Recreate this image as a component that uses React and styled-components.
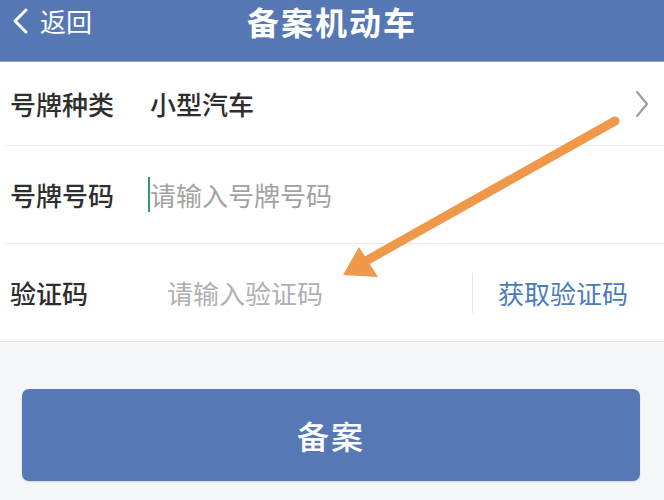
import React from "react";
import styled, { createGlobalStyle } from "styled-components";

const GlobalStyle = createGlobalStyle`
  html, body {
    margin: 0;
    padding: 0;
    background: #f4f6f8;
    font-family: "Noto Sans CJK SC", "Noto Sans", sans-serif;
  }
`;

const Page = styled.div`
  position: relative;
  width: 664px;
  height: 500px;
  overflow: hidden;
  background: #f4f6f8;
`;

const Header = styled.div`
  height: 61px;
  background: #5577b4;
  display: flex;
  align-items: flex-start;
  justify-content: center;
  position: relative;
  color: #fff;
  border-bottom: 1px solid #8aa3cf;
`;

const BackButton = styled.div`
  position: absolute;
  left: 10px;
  top: 3px;
  display: flex;
  align-items: center;
  gap: 10px;
  font-size: 26px;
  line-height: 36px;
`;

const Title = styled.div`
  margin-top: 2px;
  font-size: 32px;
  font-weight: 700;
  line-height: 38px;
  letter-spacing: 2px;
`;

const Form = styled.div`
  background: #fff;
  border-bottom: 1px solid #e4e6e9;
`;

const Row = styled.div`
  height: ${p => p.h}px;
  display: flex;
  align-items: center;
  margin-left: 4px;
  padding: 0 14px 0 6px;
  border-bottom: ${p => (p.last ? "none" : "1px solid #ececec")};
`;

const Label = styled.div`
  width: ${p => p.w || 140}px;
  font-size: 26px;
  color: #2e2e2e;
  font-weight: 500;
  flex-shrink: 0;
`;

const Value = styled.div`
  flex: 1;
  font-size: 26px;
  color: #2e2e2e;
  font-weight: 500;
`;

const Placeholder = styled.div`
  flex: 1;
  display: flex;
  align-items: center;
  font-size: 26px;
  color: ${p => (p.light ? "#b0b0b0" : "#a2a2a2")};
`;

const Cursor = styled.span`
  width: 2px;
  height: 35px;
  background: #2f9a7a;
  margin-left: -2px;
`;

const Divider = styled.div`
  width: 1px;
  height: 40px;
  background: #e6e6e6;
  margin-right: 25px;
`;

const CodeLink = styled.div`
  font-size: 26px;
  color: #4a7cba;
  padding-right: 22px;
`;

const ButtonArea = styled.div`
  padding: 47px 24px 0 22px;
`;

const SubmitButton = styled.button`
  width: 100%;
  height: 92px;
  border: none;
  border-radius: 7px;
  background: #5679b5;
  color: #fff;
  font-family: inherit;
  font-size: 32px;
  font-weight: 500;
  letter-spacing: 2px;
  box-shadow: 0 1px 2px rgba(0, 0, 0, 0.15);
`;

const ArrowOverlay = styled.svg`
  position: absolute;
  left: 0;
  top: 0;
  pointer-events: none;
`;

const App = () => (
  <Page>
    <GlobalStyle />
    <Header>
      <BackButton>
        <svg width="20" height="28" viewBox="0 0 20 28">
          <path d="M16 3 L5 14 L16 25" fill="none" stroke="#fff" strokeWidth="3" strokeLinecap="round" strokeLinejoin="round" />
        </svg>
        返回
      </BackButton>
      <Title>备案机动车</Title>
    </Header>
    <Form>
      <Row h={83}>
        <Label>号牌种类</Label>
        <Value>小型汽车</Value>
        <svg width="16" height="30" viewBox="0 0 16 30">
          <path d="M3 3 L13 15 L3 27" fill="none" stroke="#9a9a9a" strokeWidth="2" strokeLinecap="round" strokeLinejoin="round" />
        </svg>
      </Row>
      <Row h={97}>
        <Label>号牌号码</Label>
        <Placeholder>
          <Cursor />
          请输入号牌号码
        </Placeholder>
      </Row>
      <Row h={97} last>
        <Label w={157}>验证码</Label>
        <Placeholder light>请输入验证码</Placeholder>
        <Divider />
        <CodeLink>获取验证码</CodeLink>
      </Row>
    </Form>
    <ButtonArea>
      <SubmitButton>备案</SubmitButton>
    </ButtonArea>
    <ArrowOverlay width="664" height="500" viewBox="0 0 664 500">
      <line x1="615" y1="121" x2="364" y2="262" stroke="#f0984a" strokeWidth="9" strokeLinecap="round" />
      <polygon points="343,275 359,247 378,277" fill="#f0984a" />
    </ArrowOverlay>
  </Page>
);

export default App;
